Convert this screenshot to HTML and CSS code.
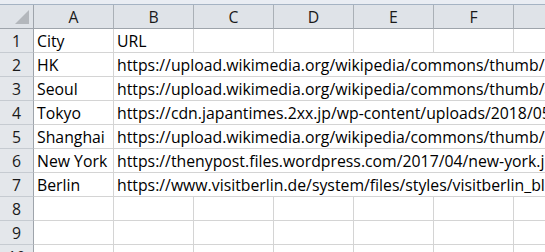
FILE: index.html
```html
<!DOCTYPE html>
<html>
<head>
<meta charset="utf-8">
<link rel="stylesheet" href="styles.css">
</head>
<body>
<div class="sheet">
  <div class="topstrip"></div>
  <div class="grid">
    <div class="corner"><span class="tri"></span></div>
    <div class="colhead">A</div>
    <div class="colhead">B</div>
    <div class="colhead">C</div>
    <div class="colhead">D</div>
    <div class="colhead">E</div>
    <div class="colhead">F</div>
    <div class="colhead last"></div>

    <div class="rowhead">1</div>
    <div class="cell">City</div>
    <div class="cell">URL</div>
    <div class="cell"></div><div class="cell"></div><div class="cell"></div><div class="cell"></div><div class="cell"></div>

    <div class="rowhead">2</div>
    <div class="cell">HK</div>
    <div class="cell wide">https://upload.wikimedia.org/wikipedia/commons/thumb/5/5b/Hong_Kong_Skyline.jpg</div>

    <div class="rowhead">3</div>
    <div class="cell">Seoul</div>
    <div class="cell wide">https://upload.wikimedia.org/wikipedia/commons/thumb/a/a1/Seoul_skyline.jpg</div>

    <div class="rowhead">4</div>
    <div class="cell">Tokyo</div>
    <div class="cell wide">https://cdn.japantimes.2xx.jp/wp-content/uploads/2018/05/tokyo.jpg</div>

    <div class="rowhead">5</div>
    <div class="cell">Shanghai</div>
    <div class="cell wide">https://upload.wikimedia.org/wikipedia/commons/thumb/c/c1/Shanghai.jpg</div>

    <div class="rowhead">6</div>
    <div class="cell">New York</div>
    <div class="cell wide">https://thenypost.files.wordpress.com/2017/04/new-york.jpg</div>

    <div class="rowhead">7</div>
    <div class="cell">Berlin</div>
    <div class="cell wide">https://www.visitberlin.de/system/files/styles/visitberlin_bleed_header.jpg</div>

    <div class="rowhead">8</div>
    <div class="cell"></div><div class="cell"></div><div class="cell"></div><div class="cell"></div><div class="cell"></div><div class="cell"></div><div class="cell"></div>

    <div class="rowhead">9</div>
    <div class="cell"></div><div class="cell"></div><div class="cell"></div><div class="cell"></div><div class="cell"></div><div class="cell"></div><div class="cell"></div>

    <div class="rowhead">10</div>
    <div class="cell"></div><div class="cell"></div><div class="cell"></div><div class="cell"></div><div class="cell"></div><div class="cell"></div><div class="cell"></div>
  </div>
</div>
</body>
</html>
```

FILE: styles.css
```css
html, body {
  margin: 0;
  padding: 0;
  background: #ffffff;
  overflow: hidden;
}
.sheet {
  width: 545px;
  height: 252px;
  overflow: hidden;
  font-family: "Open Sans", Lato, sans-serif;
  font-size: 15.8px;
  color: #000;
}
.topstrip {
  height: 4px;
  background: #e9edf3;
  border-bottom: 1px solid #a5b3c3;
}
.grid {
  display: grid;
  grid-template-columns: 34px repeat(6, 80px) 80px;
  grid-auto-rows: 24px;
  width: 594px;
}
.corner {
  position: relative;
  background: #dfe3e8;
  border-right: 1px solid #9ea4ab;
  border-bottom: 1px solid #9ea4ab;
}
.tri {
  position: absolute;
  right: 4px;
  bottom: 4px;
  width: 0;
  height: 0;
  border-left: 14px solid transparent;
  border-bottom: 14px solid #b3b7bc;
}
.colhead {
  background: #dfe3e8;
  border-right: 1px solid #aab0b6;
  border-bottom: 1px solid #9ea4ab;
  display: flex;
  align-items: center;
  justify-content: center;
  color: #1a1a1a;
  padding-top: 1px;
  box-sizing: border-box;
}
.rowhead {
  background: #e4e7eb;
  border-right: 1px solid #9ea4ab;
  border-bottom: 1px solid #c6cbd1;
  display: flex;
  align-items: center;
  justify-content: center;
  color: #1a1a1a;
  padding-top: 1px;
  box-sizing: border-box;
}
.cell {
  border-right: 1px solid #d4d4d4;
  border-bottom: 1px solid #d4d4d4;
  box-sizing: border-box;
  padding: 2px 3px 0 3px;
  white-space: nowrap;
  overflow: hidden;
  line-height: 20px;
}
.cell.wide {
  grid-column: span 6;
}
```
